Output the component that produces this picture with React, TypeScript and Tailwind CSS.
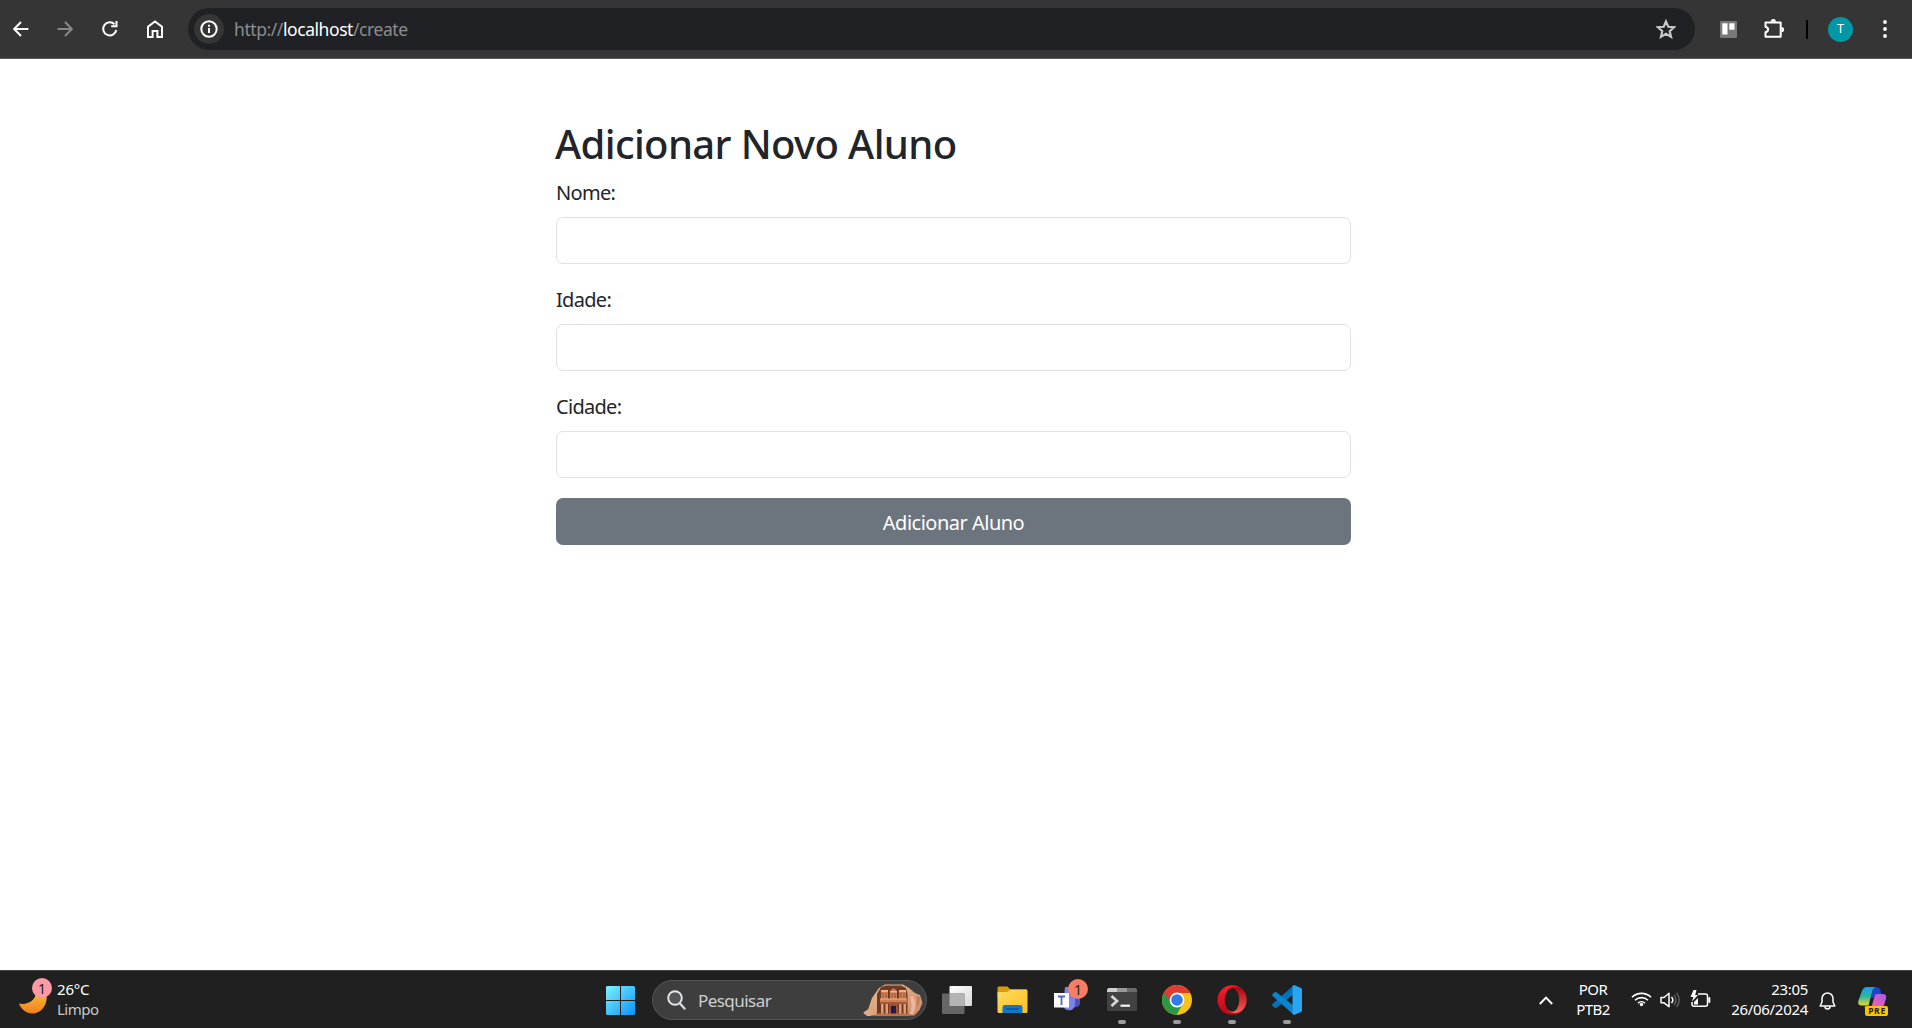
import React from 'react';

function Field({ label }: { label: string }) {
  return (
    <div className="flex flex-col">
      <label className="mb-[9px] h-[31px] pt-px text-[20px] leading-[30px] tracking-[-0.7px]">{label}</label>
      <input className="h-[47px] w-full rounded-[7px] border border-[#dee2e6] bg-white px-4 outline-none" />
    </div>
  );
}

function TaskbarApp({ children, running }: { children: React.ReactNode; running?: boolean }) {
  return (
    <div className="flex h-[54px] w-[55px] flex-col items-center">
      <div className="flex h-[49px] items-center justify-center pt-2">{children}</div>
      {running && <div className="h-1 w-2 rounded-full bg-[#9c9c9c]" />}
    </div>
  );
}

function BrowserBar() {
  return (
    <header className="flex h-[59px] items-start border-b border-[#5c5c5c] bg-[#353535] pt-2">
      <div className="flex h-[42px] w-[188px] items-center pl-[13px]">
        <svg width="16" height="16" viewBox="0 0 16 16" fill="none" stroke="#fff" strokeWidth="2">
          <path d="M15.4 8H1.5M8 1 1.2 8 8 15" />
        </svg>
        <svg className="ml-[28px]" width="16" height="16" viewBox="0 0 16 16" fill="none" stroke="#888" strokeWidth="2">
          <path d="M.4 8h13.9M8 1l6.8 7L8 15" />
        </svg>
        <svg className="ml-[28px]" width="18" height="18" viewBox="0 0 18 18" fill="none">
          <path d="M15.3 10A6.6 6.6 0 1 1 13.6 4.3" stroke="#fff" strokeWidth="2" />
          <path d="M16.5 1v6.3h-6.3V5.3h4.3V1z" fill="#fff" />
        </svg>
        <svg className="ml-[28px]" width="16" height="18" viewBox="0 0 16 18" fill="none" stroke="#fff" strokeWidth="2">
          <path d="M1 17V6.800L8 1.400l7 5.400V17h-4.600v-6H5.600v6z" />
        </svg>
      </div>
      <div className="flex h-[42px] w-[1507px] items-center rounded-full bg-[#202124] pr-[19px] pl-[6px]">
        <div className="flex size-[30px] items-center justify-center rounded-full bg-[#353535]">
          <svg width="18" height="18" viewBox="0 0 18 18" fill="none" stroke="#fff" strokeWidth="2">
            <circle cx="9" cy="9" r="7.7" />
            <path d="M9 8v5M9 4.8v2" />
          </svg>
        </div>
        <div className="ml-[10px] h-[42px] flex-1 text-[17.5px] leading-[43px] tracking-[-0.43px] whitespace-nowrap text-[#8c8d8f]">
          http://<span className="text-white">localhost</span>/create
        </div>
        <svg width="20" height="20" viewBox="0 0 20 20" fill="none" stroke="#c7c7c7" strokeWidth="2.1">
          <path d="m10 2.300 2.300 5.400 5.900.500-4.500 3.900 1.400 5.800-5.100-3.100-5.100 3.100 1.400-5.800L1.800 8.200l5.900-.500z" />
        </svg>
      </div>
      <div className="flex h-[42px] flex-1 items-center pl-[25px]">
        <svg width="17" height="17" viewBox="0 0 17 17">
          <rect width="17" height="17" rx="1" fill="#787878" />
          <rect x="2.3" y="2.3" width="5.2" height="11.2" fill="#fff" />
          <rect x="9.3" y="2.3" width="5.2" height="6.4" fill="#fff" />
        </svg>
        <svg className="mb-px ml-[26px]" width="22" height="21" viewBox="0 0 22 21">
          <path
            d="M3 4.500h14.700v14.300H2.500V14.300c3.500-.8 3.500-4.700 0-5.500V4.500z"
            fill="none"
            stroke="#fff"
            strokeWidth="2"
            strokeLinejoin="round"
          />
          <path d="M7.700 3.700a2.600 2.600 0 0 1 5.200 0zM18.500 9a2.600 2.600 0 0 1 0 5.200z" fill="#fff" />
        </svg>
        <div className="ml-[21px] h-[19px] w-[2px] bg-black" />
        <div className="ml-[20px] flex size-[25px] items-center justify-center rounded-full bg-[#0097a7] text-[12.5px] text-white">
          T
        </div>
        <svg className="ml-[30px]" width="4" height="18" viewBox="0 0 4 18" fill="#fff">
          <circle cx="2" cy="2" r="1.9" />
          <circle cx="2" cy="9" r="1.9" />
          <circle cx="2" cy="16" r="1.9" />
        </svg>
      </div>
    </header>
  );
}

function Petra() {
  return (
    <svg width="60" height="33" viewBox="0 0 60 33">
      <defs>
        <linearGradient id="rock" x1="0" x2="1" y1="0" y2="1">
          <stop offset="0" stopColor="#e9bd93" />
          <stop offset="1" stopColor="#cf8a66" />
        </linearGradient>
      </defs>
      <path d="M.5 28.500 5 25.500 9 14l7-10 6-3.500h18L46 4l6 5 5 2 2.500 8-3 7-5 5.500H6L1 30z" fill="url(#rock)" />
      <path d="M14 31V10l4-7 5-1.500h15l5 2.500 1.500 6v21z" fill="#6e3a26" />
      <path d="M17 15h27v3H17zM18 6h7v9h-7zM36 6h7v9h-7zM27 7l3.500-3L34 7v8h-7z" fill="#cf7f54" />
      <path d="M18 6h7v2h-7zM36 6h7v2h-7zM27 7h7v1.500h-7zM17 14.500h27v1H17z" fill="#f0b083" />
      <path d="M20 9v5M23 9v5M38 9v5M41 9v5M29 9v5M32 9v5" stroke="#8b4a30" strokeWidth="0.800" />
      <path d="M17 18h27v2H17z" fill="#a5583a" />
      <path d="M18 20h2.500v10H18zM22.500 20H25v10h-2.500zM36 20h2.500v10H36zM40.500 20H43v10h-2.500z" fill="#e39d73" />
      <path d="M26 19h9v11h-9z" fill="#a35231" />
      <path d="M28 22h5v8h-5z" fill="#20184f" />
      <path d="M13 29.500h33V32H13z" fill="#c46f45" />
      <path d="M47 13c2 5 2 11 0 17h3c3-6 3-12 0-18z" fill="#edb79f" />
      <path d="M53.500 12c1.500 4 1 8-.5 12 3-3 4-7 3.500-11z" fill="#b8775a" />
      <path d="M.5 28.500 5 25.500l4 3-1 3.500H4z" fill="#e3a78d" />
    </svg>
  );
}

function Taskbar() {
  return (
    <footer className="flex h-[58px] items-start border-t border-[#454848] bg-[#202020] text-[15px] text-white">
      <div className="flex h-[56px] w-[593px] pl-[18px]">
        <div className="relative h-[56px] w-[39px]">
          <svg className="absolute top-[17px] left-0" width="30" height="26" viewBox="0 0 30 26">
            <defs>
              <linearGradient id="moon" x1="0" x2="0" y1="0" y2="1">
                <stop offset="0" stopColor="#f9bd32" />
                <stop offset="1" stopColor="#f08020" />
              </linearGradient>
            </defs>
            <path d="M1 15.500c8 2 17-3 17-11.500L28.500 6C30 16 24 25.500 14.500 25.500 8 25.500 3 21 1 15.500z" fill="url(#moon)" />
          </svg>
          <div className="absolute top-[7px] left-[14px] flex size-5 items-center justify-center rounded-full bg-[#ff99a4] text-[14px] text-[#222]">
            1
          </div>
        </div>
        <div className="pt-[8px] leading-[20px] whitespace-nowrap">
          <div className="tracking-[-0.2px]">26°C</div>
          <div className="tracking-[-0.5px] text-[#c8c8c8]">Limpo</div>
        </div>
      </div>

      <div className="flex h-[56px] items-start">
        <div className="flex h-[58px] w-[59px] items-center pl-[13px]">
          <svg width="29" height="29" viewBox="0 0 29 29">
            <defs>
              <linearGradient id="win" x1="0" x2="1" y1="0" y2="1">
                <stop offset="0" stopColor="#7cf3ff" />
                <stop offset="1" stopColor="#0a93fb" />
              </linearGradient>
            </defs>
            <path
              d="M1 0h13v14H0V1zM15 0h13l1 1v13H15zM0 15h14v14H1l-1-1zM15 15h14v13l-1 1H15z"
              fill="url(#win)"
            />
          </svg>
        </div>
        <div className="mt-[9px] flex h-[40px] w-[275px] items-center rounded-full border border-[#575757] bg-[#3e3e3e] pr-[3px] pl-[14px]">
          <svg width="19" height="20" viewBox="0 0 19 20" fill="none">
            <circle cx="8" cy="8" r="6.800" fill="#555" stroke="#e4e6e8" strokeWidth="1.900" />
            <path d="m13 13.500 4.500 5" stroke="#d5d8dc" strokeWidth="2.400" strokeLinecap="round" />
          </svg>
          <span className="ml-[12px] flex-1 pt-px text-[17px] leading-[24px] tracking-[-0.55px] text-[#cfcfcf]">Pesquisar</span>
          <Petra />
        </div>

        <div className="ml-[2px] flex">
          <TaskbarApp>
            <svg width="30" height="28" viewBox="0 0 30 28">
              <defs>
                <linearGradient id="tv" x1="0" x2="1" y1="0" y2="1">
                  <stop offset="0" stopColor="#fff" />
                  <stop offset="1" stopColor="#d8d8d8" />
                </linearGradient>
              </defs>
              <rect x="7.500" width="22.500" height="20" rx="1" fill="url(#tv)" />
              <rect y="7.500" width="22.500" height="20.500" rx="1" fill="#666" />
              <path d="M7.500 7.500h15V20h-15z" fill="#b4b4b4" />
            </svg>
          </TaskbarApp>
          <TaskbarApp>
            <svg className="ml-px" width="31" height="27" viewBox="0 0 31 27">
              <defs>
                <linearGradient id="fold" x1="0" x2="1" y1="0" y2="1">
                  <stop offset="0" stopColor="#ffdc63" />
                  <stop offset="1" stopColor="#fdbf1c" />
                </linearGradient>
              </defs>
              <path d="M.5 2Q.5.500 2 .500h8.500L13.500 3.500H30V12H.5z" fill="#dd9c06" />
              <path d="M.5 6H10l3.500-2.500h15.500q1.500 0 1.500 1.500v20.500q0 1.500-1.500 1.500H2q-1.500 0-1.500-1.500z" fill="url(#fold)" />
              <path d="M5.500 27v-5.500q0-2.500 2.500-2.500h15q2.500 0 2.500 2.500V27z" fill="#0f78c8" />
              <path d="M9 23h13" stroke="#0a4f8f" strokeWidth="1.200" />
            </svg>
          </TaskbarApp>
          <div className="relative h-[54px] w-[55px]">
            <svg className="absolute top-[12px] left-[15px]" width="30" height="30" viewBox="0 0 30 30">
              <path d="M18 9h8v12q-2 4-7 3z" fill="#4b53bc" />
              <path d="M11 4h10v17c0 8-10 8-12 2z" fill="#7b83eb" />
              <rect y="10" width="15" height="14.500" fill="#fff" />
              <path d="M4 13.500h7M7.500 13.500V22" stroke="#5b62c8" strokeWidth="1.800" />
            </svg>
            <div className="absolute top-[8px] left-[29px] flex size-5 items-center justify-center rounded-full bg-[#f77d64] text-[14px] text-[#222]">
              1
            </div>
          </div>
          <TaskbarApp running>
            <svg width="30" height="23" viewBox="0 0 30 23">
              <rect width="30" height="23" rx="1.500" fill="#424242" />
              <path d="M1.500 0H10v4H0V1.500z" fill="#cfcfcf" />
              <path d="M10 0h10v4H10z" fill="#999" />
              <path d="M20 0h8.500L30 1.500V4H20z" fill="#6b6b6b" />
              <path d="m4.500 8 5.500 5-5.500 5" fill="none" stroke="#d6d6d6" strokeWidth="2.800" />
              <path d="M13.500 17.700H23" stroke="#f4f4f4" strokeWidth="2.200" />
            </svg>
          </TaskbarApp>
          <TaskbarApp running>
            <svg width="30" height="30" viewBox="0 0 30 30">
              <circle cx="15" cy="15" r="15" fill="#fbc116" />
              <path d="M15 15 2 7.500A15 15 0 0 0 14.500 30l6.500-11.500z" fill="#2a9847" />
              <path d="M15 8h13.300A15 15 0 0 0 2 7.500L8.900 18.500z" fill="#e03b2e" />
              <circle cx="15" cy="15" r="7.400" fill="#fff" />
              <circle cx="15" cy="15" r="5.800" fill="#3279ea" />
            </svg>
          </TaskbarApp>
          <TaskbarApp running>
            <svg width="30" height="30" viewBox="0 0 30 30">
              <defs>
                <linearGradient id="op" x1="0" x2="0" y1="0" y2="1">
                  <stop offset="0" stopColor="#ff1b2d" />
                  <stop offset="1" stopColor="#b30a17" />
                </linearGradient>
                <linearGradient id="op2" x1="0" x2="0" y1="0" y2="1">
                  <stop offset="0" stopColor="#a30712" />
                  <stop offset="1" stopColor="#ff5a55" />
                </linearGradient>
              </defs>
              <ellipse cx="15" cy="15" rx="14.500" ry="14.700" fill="url(#op)" />
              <path d="M11 4.500C18-1.500 29.500 3 29.500 15S18 31.500 11 25.500z" fill="url(#op2)" />
              <ellipse cx="15" cy="15" rx="7.300" ry="11.600" fill="#202020" />
            </svg>
          </TaskbarApp>
          <TaskbarApp running>
            <svg width="30" height="30" viewBox="0 0 30 30">
              <path d="M22 0v9L4.500 22.800q-1 .6-1.800 0L.5 20.800q-.7-.9 0-1.800z" fill="#0072b8" />
              <path d="M22 30v-9L4.500 7.200q-1-.6-1.800 0L.5 9.200q-.7.9 0 1.800z" fill="#0a84cf" />
              <path d="M22 0l7 3q1 .6 1 1.700v20.600q0 1.100-1 1.700l-7 3q-1.500-.5-1.500-2V2q0-1.500 1.500-2z" fill="#29a5f2" />
            </svg>
          </TaskbarApp>
        </div>
      </div>

      <div className="flex h-[56px] flex-1 items-start pl-[225px]">
        <svg className="mt-[25px]" width="14" height="9" viewBox="0 0 14 9" fill="none" stroke="#fff" strokeWidth="1.900">
          <path d="m.8 8 6.200-6.300L13.200 8" />
        </svg>
        <div className="ml-[23px] w-[34px] pt-[8px] text-center leading-[20px] tracking-[-0.6px] whitespace-nowrap">
          <div>POR</div>
          <div>PTB2</div>
        </div>
        <svg className="mt-[20px] ml-[20.5px]" width="21" height="16" viewBox="0 0 21 16" fill="none" stroke="#fff" strokeWidth="1.600">
          <path d="M1 6.300a13.500 13.500 0 0 1 19 0M4 9.300a9.300 9.300 0 0 1 13 0M7 12.200a5 5 0 0 1 7 0" />
          <circle cx="10.500" cy="13.500" r="1.700" fill="#fff" stroke="none" />
        </svg>
        <svg className="mt-[21px] ml-[8.5px]" width="21" height="17" viewBox="0 0 21 17" fill="none" strokeWidth="1.500">
          <path d="M1 5.500h3L9 1.300v13.400L4 10.800H1z" stroke="#fff" strokeLinejoin="round" />
          <path d="M11.500 5a4.500 4.500 0 0 1 0 6" stroke="#fff" />
          <path d="M14 3a7.500 7.500 0 0 1 0 10M16.500 1a10.500 10.500 0 0 1 0 14" stroke="#5e5e5e" />
        </svg>
        <svg className="mt-[19px] ml-[9px]" width="21" height="18" viewBox="0 0 21 18" fill="none">
          <path d="M8 4h7.500q2 0 2 2v8.300q0 2-2 2H4q-2 0-2-2V12" stroke="#fff" strokeWidth="1.500" />
          <path d="M19.300 8v4" stroke="#fff" strokeWidth="2" strokeLinecap="round" />
          <path d="M3.500 0 .5 7h2.800L2 11.500 8 5H5.200L6.500 0z" fill="#fff" />
          <path d="M4 12v2.500h4V8z" fill="#fff" />
        </svg>
        <div className="ml-[16px] w-[81px] pt-[8px] text-right leading-[20px] tracking-[-0.3px] whitespace-nowrap">
          <div>23:05</div>
          <div>26/06/2024</div>
        </div>
        <svg className="mt-[20px] ml-[11px]" width="17" height="20" viewBox="0 0 17 20" fill="none" stroke="#fff" strokeWidth="1.500">
          <path d="M3 7.500a5.500 5.500 0 0 1 11 0V11l1.800 4H1.200L3 11z" strokeLinejoin="round" />
          <path d="M6 15.500a2.500 2.500 0 0 0 5 0" />
        </svg>
        <div className="relative ml-[22px] h-[46px] w-[31px]">
          <svg className="absolute top-[16px] left-0" width="30" height="24" viewBox="0 0 30 24">
            <defs>
              <linearGradient id="cpa" x1="0" x2="0" y1="0" y2="1">
                <stop offset="0" stopColor="#1f9df0" />
                <stop offset="0.500" stopColor="#2cb6a4" />
                <stop offset="1" stopColor="#e6d92c" />
              </linearGradient>
              <linearGradient id="cpb" x1="1" x2="0" y1="0" y2="1">
                <stop offset="0" stopColor="#a05cf0" />
                <stop offset="0.500" stopColor="#e05cc0" />
                <stop offset="1" stopColor="#f98058" />
              </linearGradient>
            </defs>
            <path d="M15 0h3q3.500 0 4.500 3.500l.8 3.500h-4q-2 0-3 2.500L13 12z" fill="#1c45cc" />
            <path d="M9 0h9q-2.500 0-3.500 3.500L10.500 18.500H3.500Q-.8 18.500.5 13.500L4 4Q5.300 0 9 0z" fill="url(#cpa)" />
            <path d="M18.500 7H25q4 0 3 4.500L25.500 20q-1.500 3.500-4 3.500H10q-3 0-3.500-4h6.500q1-.5 1.500-3l2-7Q17 7 18.500 7z" fill="url(#cpb)" />
          </svg>
          <div className="absolute top-[35px] left-[7px] flex h-[10px] w-[23px] items-center justify-center rounded-[2px] bg-[#fdc108] pl-px text-[8.5px] leading-none font-bold tracking-[0.7px] text-[#2a2200]">
            PRE
          </div>
        </div>
      </div>
    </footer>
  );
}

export default function App() {
  return (
    <div className="flex h-[1028px] w-[1912px] flex-col overflow-hidden bg-white font-['Noto_Sans',sans-serif] text-[#212529]">
      <BrowserBar />
      <main className="flex-1 pl-[556px]">
        <form className="w-[795px] pt-[61px]">
          <h1 className="mb-[8px] h-[49px] text-[40px] leading-[48px] font-medium tracking-[-0.63px] whitespace-nowrap">
            <span className="-ml-px">Adicionar Novo Aluno</span>
          </h1>
          <div className="flex flex-col gap-5">
            <Field label="Nome:" />
            <Field label="Idade:" />
            <Field label="Cidade:" />
            <button
              type="button"
              className="h-[47px] w-full rounded-[7px] bg-[#6c757d] pt-[3px] text-[20px] leading-[30px] tracking-[-0.5px] text-white"
            >
              Adicionar Aluno
            </button>
          </div>
        </form>
      </main>
      <Taskbar />
    </div>
  );
}
